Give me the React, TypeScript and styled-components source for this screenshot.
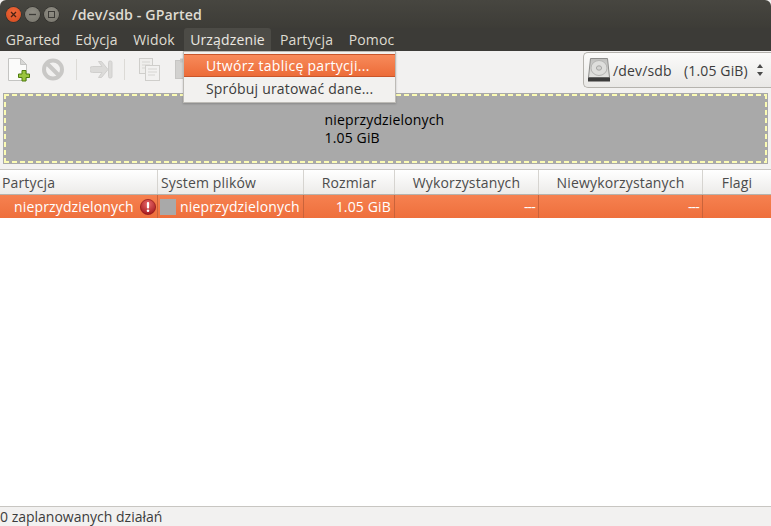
import React from "react";
import styled, { createGlobalStyle } from "styled-components";

const Global = createGlobalStyle`
  html, body { margin: 0; padding: 0; background: #f2f1f0; }
  body { font-family: "Open Sans", "Noto Sans", sans-serif; font-size: 14px; color: #3c3c3c; }
  #root { width: 771px; height: 526px; overflow: hidden; }
`;

const Window = styled.div`
  position: relative;
  width: 771px;
  height: 526px;
  display: flex;
  flex-direction: column;
  background: #f2f1f0;
  overflow: hidden;
`;

const TitleBar = styled.div`
  height: 28px;
  display: flex;
  align-items: center;
  padding-left: 6px;
  background: linear-gradient(#474640, #3d3c37);
  border-radius: 6px 6px 0 0;
`;

const WinBtn = styled.div<{ $c: string; $d: string }>`
  width: 15px;
  height: 15px;
  margin-right: 4px;
  border-radius: 50%;
  background: radial-gradient(circle at 50% 35%, ${(p) => p.$c}, ${(p) => p.$d});
  box-shadow: 0 0 0 0.5px #2c2b28;
  display: flex;
  align-items: center;
  justify-content: center;
`;

const Title = styled.div`
  margin-left: 9px;
  color: #dfdbd2;
  font-weight: 600;
  font-size: 14.2px;
  letter-spacing: 0.1px;
`;

const MenuBar = styled.div`
  height: 23px;
  display: flex;
  background: #3c3b37;
  align-items: stretch;
`;

const MenuItem = styled.div<{ $w: number; $mr?: number; $active?: boolean }>`
  width: ${(p) => p.$w}px;
  margin-right: ${(p) => p.$mr ?? 0}px;
  display: flex;
  align-items: center;
  justify-content: center;
  color: ${(p) => (p.$active ? "#ebe8e2" : "#dfdbd2")};
  background: ${(p) => (p.$active ? "#4c4b46" : "transparent")};
  border-radius: 3px 3px 0 0;
  font-size: 14px;
  letter-spacing: 0.15px;
  white-space: nowrap;
`;

const Toolbar = styled.div`
  height: 42px;
  display: flex;
  align-items: flex-start;
  padding: 7px 0 0 6px;
  box-sizing: border-box;
  background: #f2f1f0;
`;

const ToolIcon = styled.div<{ $ml?: number }>`
  width: 24px;
  height: 24px;
  margin-left: ${(p) => p.$ml ?? 0}px;
  flex: none;
`;

const ToolSep = styled.div<{ $ml: number }>`
  width: 1px;
  height: 21px;
  margin-top: 1px;
  margin-left: ${(p) => p.$ml}px;
  background: #dcdad6;
  flex: none;
`;

const DeviceSelect = styled.div`
  margin-left: auto;
  width: 188px;
  height: 36px;
  margin-top: -6px;
  box-sizing: border-box;
  border: 1px solid #b5b3ae;
  border-right: 0;
  border-radius: 5px 0 0 5px;
  background: linear-gradient(#fbfbfa, #e9e8e6);
  display: flex;
  align-items: center;
  padding-left: 3px;
  color: #3c3c3c;
  font-size: 14px;
  letter-spacing: 0.15px;
  white-space: nowrap;
`;

const DeviceName = styled.span`
  margin-left: 2px;
  width: 71px;
`;

const DeviceSize = styled.span`
  flex: 1;
`;

const Arrows = styled.div`
  width: 22px;
  display: flex;
  justify-content: center;
`;

const VisualWrap = styled.div`
  height: 71px;
  margin: 0 3px;
  box-sizing: border-box;
  background: #a9a9a9;
  padding: 1px;
`;

const dash = "#fbfbb4";

const Visual = styled.div`
  height: 100%;
  box-sizing: border-box;
  background-image:
    repeating-linear-gradient(90deg, ${dash} 0 5px, transparent 5px 8px),
    repeating-linear-gradient(90deg, ${dash} 0 5px, transparent 5px 8px),
    repeating-linear-gradient(0deg, ${dash} 0 5px, transparent 5px 8px),
    repeating-linear-gradient(0deg, ${dash} 0 5px, transparent 5px 8px);
  background-size: 100% 2px, 100% 2px, 2px 100%, 2px 100%;
  background-position: 0 0, 0 100%, 0 0, 100% 0;
  background-repeat: no-repeat;
  display: flex;
  align-items: center;
  justify-content: center;
  color: #000;
  font-size: 14px;
  letter-spacing: 0.15px;
  line-height: 18px;
`;

const VisualLabel = styled.div`
  width: 122px;
  white-space: nowrap;
`;

const Table = styled.div`
  margin-top: 5px;
  flex: 1;
  display: flex;
  flex-direction: column;
  background: #fff;
  border-top: 1px solid #c8c6c2;
`;

const HeadRow = styled.div`
  height: 24px;
  display: grid;
  grid-template-columns: 158px 146px 91px 144px 164px 1fr;
  background: linear-gradient(#ffffff, #ecebe9);
  border-bottom: 1px solid #b5b3ae;
  box-sizing: content-box;
`;

const HeadCell = styled.div<{ $center?: boolean; $last?: boolean; $pl?: number }>`
  display: flex;
  align-items: center;
  justify-content: ${(p) => (p.$center ? "center" : "flex-start")};
  padding-left: ${(p) => (p.$center ? 0 : p.$pl ?? 2)}px;
  border-right: ${(p) => (p.$last ? "0" : "1px solid #d6d4d0")};
  color: #4c4c4c;
  font-size: 14px;
  letter-spacing: 0.15px;
  white-space: nowrap;
  box-sizing: border-box;
`;

const BodyRow = styled.div`
  height: 23px;
  display: grid;
  grid-template-columns: 158px 146px 91px 144px 164px 1fr;
  background: linear-gradient(#f68150, #ee6f3c);
`;

const BodyCell = styled.div<{ $end?: boolean; $last?: boolean; $pl?: number }>`
  display: flex;
  align-items: center;
  justify-content: ${(p) => (p.$end ? "flex-end" : "flex-start")};
  padding-left: ${(p) => p.$pl ?? 0}px;
  padding-right: ${(p) => (p.$end ? 3 : 0)}px;
  border-right: ${(p) => (p.$last ? "0" : "1px solid #ca633a")};
  color: #fff;
  font-size: 14px;
  letter-spacing: 0.15px;
  white-space: nowrap;
  box-sizing: border-box;
`;

const Dashes = styled.span`
  letter-spacing: -0.8px;
`;

const Swatch = styled.div`
  width: 16px;
  height: 16px;
  background: #a9a9a9;
  margin-right: 4px;
  flex: none;
`;

const Empty = styled.div`
  flex: 1;
  background: #fff;
`;

const StatusBar = styled.div`
  height: 19px;
  border-top: 1px solid #c8c6c2;
  background: #f2f1f0;
  display: flex;
  align-items: center;
  color: #3c3c3c;
  font-size: 14px;
  white-space: nowrap;
`;

const Dropdown = styled.div`
  position: absolute;
  left: 183px;
  top: 51px;
  width: 213px;
  height: 52px;
  box-sizing: border-box;
  background: #f2f1ef;
  border: 1px solid #bdbbb6;
  box-shadow: 0 1px 2px rgba(0, 0, 0, 0.2);
  padding-top: 2px;
`;

const DropItem = styled.div<{ $hot?: boolean }>`
  height: 23px;
  box-sizing: border-box;
  display: flex;
  align-items: center;
  padding-left: 22px;
  font-size: 14px;
  letter-spacing: ${(p) => (p.$hot ? 0.3 : 0.18)}px;
  white-space: nowrap;
  color: ${(p) => (p.$hot ? "#fff" : "#3c3c3c")};
  background: ${(p) => (p.$hot ? "linear-gradient(#f88a5a, #ec6c39)" : "transparent")};
  border-style: solid;
  border-color: #c9552a;
  border-width: ${(p) => (p.$hot ? "1px 0" : "0")};
`;

const NewIcon = () => (
  <svg width="24" height="24" viewBox="0 0 24 24">
    <path d="M2.5 0.5H14.5L20.5 6.5V22.5H2.5Z" fill="#fbfbfa" stroke="#c4c4c2" />
    <path d="M14.5 0.5V6.5H20.5Z" fill="#d8d8d6" stroke="#c4c4c2" />
    <path d="M16 12.5h4v3.5h3.5v3.5H20V23h-4v-3.5h-3.5V16H16Z" fill="#9bc53d" stroke="#4e7d0e" />
  </svg>
);

const StopIcon = () => (
  <svg width="24" height="24" viewBox="0 0 24 24">
    <circle cx="12" cy="11.5" r="9" fill="none" stroke="#c9c8c6" strokeWidth="4" />
    <path d="M5.5 5 18.5 18" stroke="#c9c8c6" strokeWidth="4" />
  </svg>
);

const ApplyIcon = () => (
  <svg width="24" height="24" viewBox="0 0 24 24">
    <path d="M2.5 8.5H12L8.5 3.5h3l6.5 8-6.5 8h-3l3.5-5H2.5a3 3 0 0 1 0-6Z" fill="#dcdbd9" stroke="#d0cfcd" strokeLinejoin="round" />
    <rect x="18.5" y="3" width="3.5" height="17" rx="1.5" fill="#dcdbd9" stroke="#d0cfcd" />
  </svg>
);

const CopyIcon = () => (
  <svg width="24" height="24" viewBox="0 0 24 24">
    <rect x="2.5" y="0.5" width="13" height="15" fill="#efeeec" stroke="#cfcecb" />
    <path d="M5 4h8M5 7h8M5 10h6" stroke="#d6d5d2" />
    <rect x="8.5" y="7.5" width="14" height="15" fill="#f2f1f0" stroke="#cfcecb" />
    <path d="M11 11h9M11 14h9M11 17h7" stroke="#d6d5d2" />
  </svg>
);

const PasteIcon = () => (
  <svg width="24" height="24" viewBox="0 0 24 24">
    <rect x="2.5" y="2.5" width="14" height="18" fill="#d2d1cf" stroke="#c6c5c3" />
    <rect x="7" y="0.5" width="6" height="4" fill="#c6c5c3" />
  </svg>
);

const DiskIcon = () => (
  <svg width="24" height="24" viewBox="0 0 24 24">
    <defs>
      <linearGradient id="disk" x1="0" y1="0" x2="0" y2="1">
        <stop offset="0" stopColor="#bfbfbd" />
        <stop offset="1" stopColor="#e4e4e2" />
      </linearGradient>
    </defs>
    <path d="M3.5 0.5h17l2 19H1.5Z" fill="url(#disk)" stroke="#8e8e8c" />
    <ellipse cx="12" cy="10" rx="8" ry="7.5" fill="#dededc" stroke="#b4b4b2" />
    <ellipse cx="12" cy="10" rx="2.6" ry="2.2" fill="#d4d4d2" stroke="#a6a6a4" />
    <rect x="1" y="19.5" width="22" height="4" fill="#3b3b3b" />
  </svg>
);

const UpDown = () => (
  <svg width="8" height="14" viewBox="0 0 8 14">
    <path d="M4 1 7 5H1Z M4 13 1 9H7Z" fill="#4a4a4a" />
  </svg>
);

const AlertIcon = () => (
  <svg width="16" height="16" viewBox="0 0 16 16" style={{ marginLeft: 6, flex: "none" }}>
    <defs>
      <radialGradient id="al" cx="50%" cy="30%" r="75%">
        <stop offset="0" stopColor="#e8686a" />
        <stop offset="1" stopColor="#a01418" />
      </radialGradient>
    </defs>
    <circle cx="8" cy="8" r="7.6" fill="url(#al)" stroke="#8e1417" strokeWidth="0.7" />
    <rect x="6.9" y="3" width="2.2" height="6.5" rx="1" fill="#fff" />
    <circle cx="8" cy="11.7" r="1.3" fill="#fff" />
  </svg>
);

const Glyph = styled.svg`
  display: block;
`;

export default function App() {
  return (
    <Window>
      <Global />
      <TitleBar>
        <WinBtn $c="#f0683a" $d="#d24a1e">
          <Glyph width="7" height="7" viewBox="0 0 7 7">
            <path d="M1 1 6 6M6 1 1 6" stroke="#4a2213" strokeWidth="1.3" />
          </Glyph>
        </WinBtn>
        <WinBtn $c="#8f8d84" $d="#77756c">
          <Glyph width="7" height="7" viewBox="0 0 7 7">
            <path d="M0 3.5H7" stroke="#3c3b37" strokeWidth="1.3" />
          </Glyph>
        </WinBtn>
        <WinBtn $c="#8f8d84" $d="#77756c">
          <Glyph width="7" height="7" viewBox="0 0 7 7">
            <rect x="0.5" y="0.5" width="6" height="6" fill="none" stroke="#3c3b37" />
          </Glyph>
        </WinBtn>
        <Title>/dev/sdb - GParted</Title>
      </TitleBar>
      <MenuBar>
        <MenuItem $w={66}>GParted</MenuItem>
        <MenuItem $w={61}>Edycja</MenuItem>
        <MenuItem $w={54} $mr={3}>Widok</MenuItem>
        <MenuItem $w={87} $active>Urządzenie</MenuItem>
        <MenuItem $w={71}>Partycja</MenuItem>
        <MenuItem $w={59}>Pomoc</MenuItem>
      </MenuBar>
      <Toolbar>
        <ToolIcon><NewIcon /></ToolIcon>
        <ToolIcon $ml={11}><StopIcon /></ToolIcon>
        <ToolSep $ml={11} />
        <ToolIcon $ml={13}><ApplyIcon /></ToolIcon>
        <ToolSep $ml={10} />
        <ToolIcon $ml={12}><CopyIcon /></ToolIcon>
        <ToolIcon $ml={12}><PasteIcon /></ToolIcon>
        <DeviceSelect>
          <DiskIcon />
          <DeviceName>/dev/sdb</DeviceName>
          <DeviceSize>(1.05 GiB)</DeviceSize>
          <Arrows><UpDown /></Arrows>
        </DeviceSelect>
      </Toolbar>
      <VisualWrap>
        <Visual>
          <VisualLabel>
            nieprzydzielonych
            <br />
            1.05 GiB
          </VisualLabel>
        </Visual>
      </VisualWrap>
      <Table>
        <HeadRow>
          <HeadCell>Partycja</HeadCell>
          <HeadCell $pl={3}>System plików</HeadCell>
          <HeadCell $center>Rozmiar</HeadCell>
          <HeadCell $center>Wykorzystanych</HeadCell>
          <HeadCell $center>Niewykorzystanych</HeadCell>
          <HeadCell $center $last>Flagi</HeadCell>
        </HeadRow>
        <BodyRow>
          <BodyCell $pl={14}>
            nieprzydzielonych
            <AlertIcon />
          </BodyCell>
          <BodyCell $pl={2}>
            <Swatch />
            nieprzydzielonych
          </BodyCell>
          <BodyCell $end>1.05 GiB</BodyCell>
          <BodyCell $end><Dashes>---</Dashes></BodyCell>
          <BodyCell $end><Dashes>---</Dashes></BodyCell>
          <BodyCell $last />
        </BodyRow>
        <Empty />
      </Table>
      <StatusBar>0 zaplanowanych działań</StatusBar>
      <Dropdown>
        <DropItem $hot>Utwórz tablicę partycji...</DropItem>
        <DropItem>Spróbuj uratować dane...</DropItem>
      </Dropdown>
    </Window>
  );
}
